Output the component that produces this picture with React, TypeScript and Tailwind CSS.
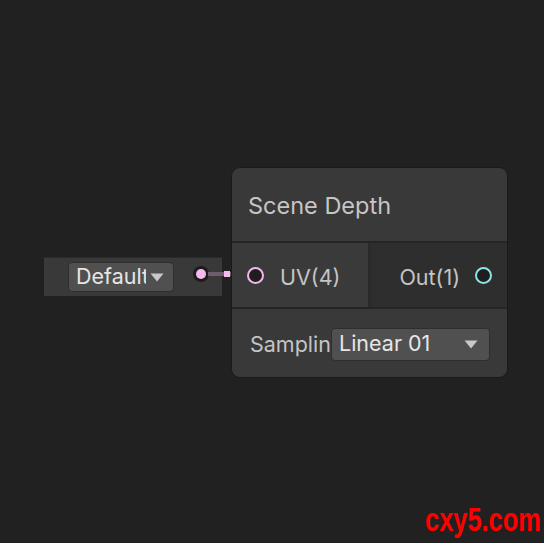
import React from "react";

const font = { fontFamily: "Inter, 'Noto Sans', 'DejaVu Sans', sans-serif" };

function Tri({ className = "" }: { className?: string }) {
  return (
    <svg width="14" height="9" viewBox="0 0 14 9" className={className}>
      <path d="M0.5 0.5 L13.5 0.5 L7 8.5 Z" fill="#c8c8c8" />
    </svg>
  );
}

export default function App() {
  return (
    <div className="relative w-[544px] h-[543px] bg-[#212121] overflow-hidden" style={font}>
      {/* property node */}
      <div className="absolute left-[44px] top-[257px] w-[178px] h-[39px] bg-[#393939] border-t border-[#2a2a2a] flex items-center pl-[24px]">
        <div className="w-[106px] h-[30px] rounded-[4px] bg-[#505050] border border-[#2e2e2e] flex items-center pl-[7px] pr-[9px]">
          <span className="text-[21.5px] leading-none text-[#e6e6e6] overflow-hidden whitespace-nowrap w-[70px] shrink-0">Default</span>
          <Tri className="ml-auto shrink-0" />
        </div>
      </div>
      {/* output dot of property node */}
      <div className="absolute left-[193px] top-[266px] w-[16px] h-[16px] rounded-full bg-[#1c1c1c] flex items-center justify-center">
        <div className="w-[10px] h-[10px] rounded-full bg-[#f6b9ee]" />
      </div>
      {/* wire */}
      <div className="absolute left-[208px] top-[272px] w-[42px] h-[4px] bg-[#6e5e6c]" />
      <div className="absolute left-[224px] top-[271px] w-[6px] h-[6px] bg-[#f6b9ee]" />

      {/* main node */}
      <div className="absolute left-[231px] top-[167px] w-[277px] h-[211px] rounded-[9px] border border-[#1a1a1a] bg-[#393939] overflow-hidden flex flex-col">
        <div className="h-[73px] flex items-center pl-[16px]">
          <span className="text-[23.5px] text-[#c6c6c6] mt-[2px]">Scene Depth</span>
        </div>
        <div className="h-[2px] bg-[#252525]" />
        <div className="h-[64px] flex">
          <div className="w-[136px] bg-[#3a3a3a] flex items-center pl-[15px] gap-[16px]">
            <div className="w-[17px] h-[17px] rounded-full border-2 border-[#f4b5ee] bg-[#1e1e1e] shrink-0" />
            <span className="text-[21.5px] text-[#c4c4c4] mt-[5px]">UV(4)</span>
          </div>
          <div className="w-[3px] bg-[#2a2a2a]" />
          <div className="flex-1 bg-[#2e2e2e] flex items-center justify-end pr-[15px] gap-[15px]">
            <span className="text-[21.5px] text-[#c4c4c4] mt-[5px]">Out(1)</span>
            <div className="w-[17px] h-[17px] rounded-full border-2 border-[#86e6e8] bg-[#1e1e1e] shrink-0" />
          </div>
        </div>
        <div className="h-[2px] bg-[#252525]" />
        <div className="flex-1 flex items-center pl-[18px] pt-[2px]">
          <span className="text-[21.5px] text-[#c4c4c4] w-[81px] overflow-hidden whitespace-nowrap shrink-0">Sampling</span>
          <div className="w-[159px] h-[33px] rounded-[4px] bg-[#505050] border border-[#2e2e2e] flex items-center pl-[7px] pr-[11px]">
            <span className="text-[21.5px] leading-none text-[#e6e6e6] whitespace-nowrap">Linear 01</span>
            <Tri className="ml-auto" />
          </div>
        </div>
      </div>

      {/* watermark */}
      <div
        className="absolute left-[425px] top-[503px] text-[33px] font-bold text-[#ff0000] leading-none origin-left scale-x-[0.77] whitespace-nowrap"
        style={{ fontFamily: "'Liberation Sans', 'DejaVu Sans', sans-serif" }}
      >
        cxy5.com
      </div>
    </div>
  );
}
